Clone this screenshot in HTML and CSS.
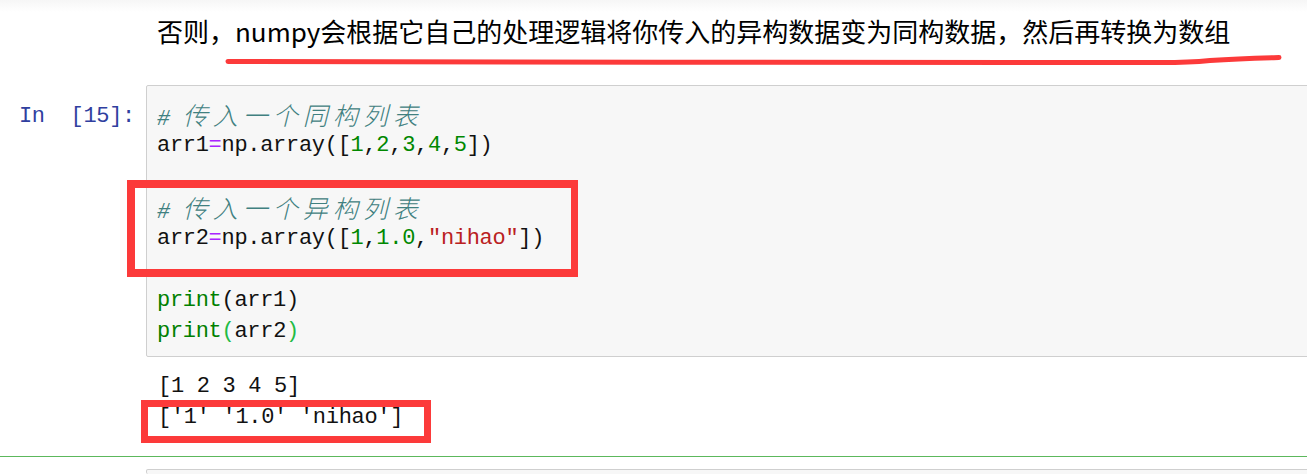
FILE: index.html
```html
<!DOCTYPE html>
<html lang="zh-CN">
<head>
<meta charset="utf-8">
<title>numpy 异构数据</title>
<link rel="stylesheet" href="styles.css">
</head>
<body>
<div class="notebook">
  <div class="cell md-cell">
    <div class="prompt"></div>
    <div class="md-text">否则，numpy会根据它自己的处理逻辑将你传入的异构数据变为同构数据，然后再转换为数组</div>
  </div>

  <div class="cell code-cell">
    <div class="input-row">
      <div class="prompt in-prompt">In&nbsp;&nbsp;[15]:</div>
      <div class="input-area">
        <div class="line"><span class="cm-comment">#&nbsp;<span class="cjk">传入一个同构列表</span></span></div>
        <div class="line">arr1<span class="cm-op">=</span>np.array([<span class="cm-num">1</span>,<span class="cm-num">2</span>,<span class="cm-num">3</span>,<span class="cm-num">4</span>,<span class="cm-num">5</span>])</div>
        <div class="line"></div>
        <div class="line"><span class="cm-comment">#&nbsp;<span class="cjk">传入一个异构列表</span></span></div>
        <div class="line">arr2<span class="cm-op">=</span>np.array([<span class="cm-num">1</span>,<span class="cm-num">1.0</span>,<span class="cm-str">"nihao"</span>])</div>
        <div class="line"></div>
        <div class="line"><span class="cm-builtin">print</span>(arr1)</div>
        <div class="line"><span class="cm-builtin">print</span><span class="cm-match">(</span>arr2<span class="cm-match">)</span></div>
      </div>
    </div>
    <div class="output-row">
      <div class="prompt"></div>
      <div class="output-area">
        <div class="line">[1 2 3 4 5]</div>
        <div class="line">['1' '1.0' 'nihao']</div>
      </div>
    </div>
  </div>

  <div class="cell next-cell">
    <div class="input-row">
      <div class="prompt"></div>
      <div class="input-area empty"></div>
    </div>
  </div>

  <svg class="pen-underline" width="1307" height="80" viewBox="0 0 1307 80" aria-hidden="true">
    <path d="M228 61.5 C 500 62.5, 900 62, 1150 62.5 C 1185 63, 1195 62, 1210 60.5 C 1240 58.5, 1262 58, 1279 57.5" fill="none" stroke="#fc3a3a" stroke-width="5" stroke-linecap="round"/>
  </svg>
  <div class="mark mark-code"></div>
  <div class="mark mark-output"></div>
</div>
</body>
</html>
```

FILE: styles.css
```css
html, body {
  margin: 0;
  padding: 0;
}

body {
  background: linear-gradient(to bottom, #f6f6f6 0px, #ffffff 12px) no-repeat, #ffffff;
  overflow: hidden;
  width: 1307px;
  height: 474px;
}

.notebook {
  position: relative;
  width: 1340px;
}

.cell {
  display: flex;
  flex-direction: column;
}

.md-cell {
  flex-direction: row;
  padding: 13px 0 36px 0;
}

.prompt {
  flex: none;
  width: 146px;
  box-sizing: border-box;
  padding-right: 11px;
  text-align: right;
}

.md-text {
  padding-left: 11px;
  font-family: "Noto Sans CJK SC", "Liberation Sans", sans-serif;
  font-size: 26px;
  line-height: 36px;
  color: #000000;
  white-space: nowrap;
}

.input-row,
.output-row {
  display: flex;
  flex-direction: row;
}

.in-prompt,
.line {
  font-family: "Liberation Mono", "DejaVu Sans Mono", monospace;
  font-size: 22px;
  letter-spacing: -0.3px;
}

.in-prompt {
  color: #303f9f;
  padding-top: 16px;
  line-height: 31px;
  white-space: nowrap;
}

.input-area {
  flex: 1;
  background: #f7f7f7;
  border: 1px solid #cfcfcf;
  border-radius: 2px;
  padding: 13px 0 9px 10px;
}

.line {
  height: 31px;
  line-height: 31px;
  white-space: pre;
  color: #111111;
}

.cm-comment {
  color: #408080;
  font-style: italic;
}

.cjk {
  font-family: "Noto Sans CJK SC", sans-serif;
  font-size: 25px;
  font-weight: 300;
  letter-spacing: 5px;
}

.cm-op {
  color: #aa22ff;
}

.cm-num {
  color: #008800;
}

.cm-str {
  color: #ba2121;
}

.cm-builtin {
  color: #008000;
}

.cm-match {
  color: #22bb44;
}

.output-area {
  padding: 14px 0 23px 12px;
}

.next-cell {
  border-top: 1px solid #5cb85c;
  padding-top: 12px;
}

.input-area.empty {
  height: 4px;
  padding: 0;
  border-bottom: none;
}

.pen-underline {
  position: absolute;
  left: 0;
  top: 0;
}

.mark {
  position: absolute;
  box-sizing: border-box;
  border-style: solid;
  border-color: #fc3a3a;
}

.mark-code {
  left: 127px;
  top: 180px;
  width: 451px;
  height: 97px;
  border-width: 8px 7px 8px 8px;
}

.mark-output {
  left: 141px;
  top: 400px;
  width: 290px;
  height: 43px;
  border-width: 7px;
}
```
